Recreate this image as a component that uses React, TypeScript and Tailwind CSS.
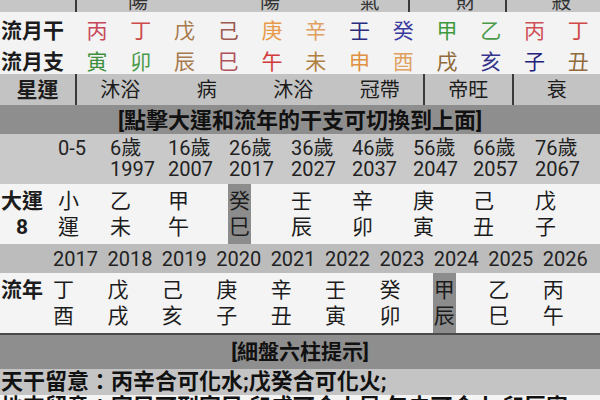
import React from "react";

const topStems: [string, string][] = [
  ["丙", "text-[#c8485a]"],
  ["丁", "text-[#cc4a4a]"],
  ["戊", "text-[#a87a4e]"],
  ["己", "text-[#9c5a52]"],
  ["庚", "text-[#e89a4a]"],
  ["辛", "text-[#e0a060]"],
  ["壬", "text-[#2a2a80]"],
  ["癸", "text-[#3a3aa0]"],
  ["甲", "text-[#3f9a3f]"],
  ["乙", "text-[#4a9a4a]"],
  ["丙", "text-[#d05058]"],
  ["丁", "text-[#d04848]"],
];

const topBranches: [string, string][] = [
  ["寅", "text-[#3f8f3f]"],
  ["卯", "text-[#4a9a4a]"],
  ["辰", "text-[#a87a4e]"],
  ["巳", "text-[#b0505a]"],
  ["午", "text-[#d03a3a]"],
  ["未", "text-[#b08040]"],
  ["申", "text-[#e0903e]"],
  ["酉", "text-[#e0a060]"],
  ["戌", "text-[#8f6a3a]"],
  ["亥", "text-[#34348c]"],
  ["子", "text-[#22227a]"],
  ["丑", "text-[#8f6a3a]"],
];

const ages: { w: string; a: string; y: string }[] = [
  { w: "w-[52px]", a: "0-5", y: "" },
  { w: "w-[58px]", a: "6歲", y: "1997" },
  { w: "w-[61px]", a: "16歲", y: "2007" },
  { w: "w-[62px]", a: "26歲", y: "2017" },
  { w: "w-[61px]", a: "36歲", y: "2027" },
  { w: "w-[61px]", a: "46歲", y: "2037" },
  { w: "w-[60px]", a: "56歲", y: "2047" },
  { w: "w-[62px]", a: "66歲", y: "2057" },
  { w: "flex-1", a: "76歲", y: "2067" },
];

const dayun: [string, string][] = [
  ["小", "運"],
  ["乙", "未"],
  ["甲", "午"],
  ["癸", "巳"],
  ["壬", "辰"],
  ["辛", "卯"],
  ["庚", "寅"],
  ["己", "丑"],
  ["戊", "子"],
];

const years = ["2017", "2018", "2019", "2020", "2021", "2022", "2023", "2024", "2025", "2026"];
const liunian: [string, string][] = [
  ["丁", "酉"],
  ["戊", "戌"],
  ["己", "亥"],
  ["庚", "子"],
  ["辛", "丑"],
  ["壬", "寅"],
  ["癸", "卯"],
  ["甲", "辰"],
  ["乙", "巳"],
  ["丙", "午"],
];

export default function App() {
  return (
    <div className="w-[600px] h-[400px] overflow-hidden bg-[#f3f3f3] text-[#1c1c1c] font-[family-name:Roboto,'Noto_Sans_CJK_TC',sans-serif]">
      {/* top cut row */}
      <div className="flex h-[12px] overflow-hidden bg-[#c6c6c6] text-[20px] leading-[20px] text-[#333]">
        <div className="w-[77px] shrink-0 border-r-2 border-[#3a3a3a]" />
        <div className="flex-1 pl-[51px]"><div className="-mt-[8px]">陽</div></div>
        <div className="flex-1" />
        <div className="flex-1 pl-[35px]"><div className="-mt-[8px]">陽</div></div>
        <div className="flex-1 pl-[51px]"><div className="-mt-[8px]">氣</div></div>
        <div className="flex-1 pl-[46px] border-l-2 border-[#3a3a3a]"><div className="-mt-[8px]">財</div></div>
        <div className="flex-1 pl-[45px] border-l-2 border-[#3a3a3a]"><div className="-mt-[8px]">殺</div></div>
      </div>

      {/* 流月干 */}
      <div className="flex h-[31px] items-center pt-[7px] bg-[#f3f3f3] text-[21px] leading-[24px]">
        <div className="w-[75px] shrink-0 pl-[1px] font-bold">流月干</div>
        {topStems.map(([c, cl], i) => (
          <div key={i} className={`flex-1 text-center ${cl}`}>{c}</div>
        ))}
      </div>
      {/* 流月支 */}
      <div className="flex h-[31px] items-center pt-[6px] bg-[#f3f3f3] text-[21px] leading-[24px]">
        <div className="w-[75px] shrink-0 pl-[1px] font-bold">流月支</div>
        {topBranches.map(([c, cl], i) => (
          <div key={i} className={`flex-1 text-center ${cl}`}>{c}</div>
        ))}
      </div>

      {/* 星運 */}
      <div className="flex h-[31px] bg-[#c3c3c3] text-[20px] leading-[24px]">
        <div className="w-[77px] shrink-0 border-r-2 border-[#3a3a3a] flex items-center justify-center font-bold text-[21px]">星運</div>
        <div className="flex-1 flex items-center justify-center">沐浴</div>
        <div className="flex-1 flex items-center justify-center">病</div>
        <div className="flex-1 flex items-center justify-center">沐浴</div>
        <div className="flex-1 flex items-center justify-center">冠帶</div>
        <div className="flex-1 flex items-center justify-center border-l-2 border-[#3a3a3a]">帝旺</div>
        <div className="flex-1 flex items-center justify-center border-l-2 border-[#3a3a3a]">衰</div>
      </div>

      {/* header 1 */}
      <div className="flex h-[29px] items-center justify-center bg-[#8e8e8e] font-bold text-[22px] leading-[26px] pt-[2px] text-[#111]">
        [點擊大運和流年的干支可切換到上面]
      </div>

      {/* ages */}
      <div className="flex h-[50px] items-center bg-[#c9c9c9] text-[20px] leading-[21px] text-[#222]">
        <div className="w-[58px] shrink-0" />
        {ages.map((a, i) => (
          <div key={i} className={`${a.w} shrink-0 flex flex-col`}>
            <div>{a.a}</div>
            <div>{a.y || "\u00a0"}</div>
          </div>
        ))}
      </div>

      {/* 大運 */}
      <div className="flex h-[60px] bg-[#f4f4f4] text-[21px] leading-[26px]">
        <div className="w-[58px] shrink-0 flex items-center">
          <div className="w-[44px] text-center font-bold">
            <div>大運</div>
            <div>8</div>
          </div>
        </div>
        {dayun.map(([s, b], i) => (
          <div key={i} className={`${ages[i].w} shrink-0 flex`}>
            <div className={`h-full flex flex-col justify-center ${i === 3 ? "bg-[#8c8c8c] w-[23px] -ml-[1px] pl-[1px]" : ""}`}>
              <div>{s}</div>
              <div>{b}</div>
            </div>
          </div>
        ))}
      </div>

      {/* years */}
      <div className="flex h-[29px] items-center bg-[#bcbcbc] text-[20px] leading-[24px] pr-[3px] text-[#222]">
        <div className="w-[53px] shrink-0" />
        {years.map((y) => (
          <div key={y} className="flex-1">{y}</div>
        ))}
      </div>

      {/* 流年 */}
      <div className="flex h-[60px] bg-[#f4f4f4] text-[21px] leading-[26px] pr-[3px]">
        <div className="w-[53px] shrink-0 flex items-center">
          <div className="pl-[1px] font-bold">
            <div>流年</div>
            <div>&nbsp;</div>
          </div>
        </div>
        {liunian.map(([s, b], i) => (
          <div key={i} className="flex-1 flex">
            <div className={`h-full flex flex-col justify-center ${i === 7 ? "bg-[#8c8c8c] w-[23px] -ml-[1px] pl-[1px]" : ""}`}>
              <div>{s}</div>
              <div>{b}</div>
            </div>
          </div>
        ))}
      </div>

      <div className="h-[2px] bg-[#4a4a4a]" />

      {/* header 2 */}
      <div className="flex h-[34px] items-center justify-center bg-[#8e8e8e] font-bold text-[21px] leading-[26px] text-[#111]">
        [細盤六柱提示]
      </div>

      {/* 天干留意 */}
      <div className="flex h-[26px] items-center bg-[#c4c4c4] font-bold text-[22px] leading-[26px] pl-[1px] text-[#111]">
        天干留意：丙辛合可化水;戊癸合可化火;
      </div>

      {/* 地支留意 (cut) */}
      <div className="bg-[#f4f4f4] font-bold text-[22px] leading-[20px] pl-[1px] pt-[2px] whitespace-nowrap text-[#111]">
        地支留意：寅巳可刑寅巳;卯戌可合火局;午未可合火,卯辰害;
      </div>
    </div>
  );
}
